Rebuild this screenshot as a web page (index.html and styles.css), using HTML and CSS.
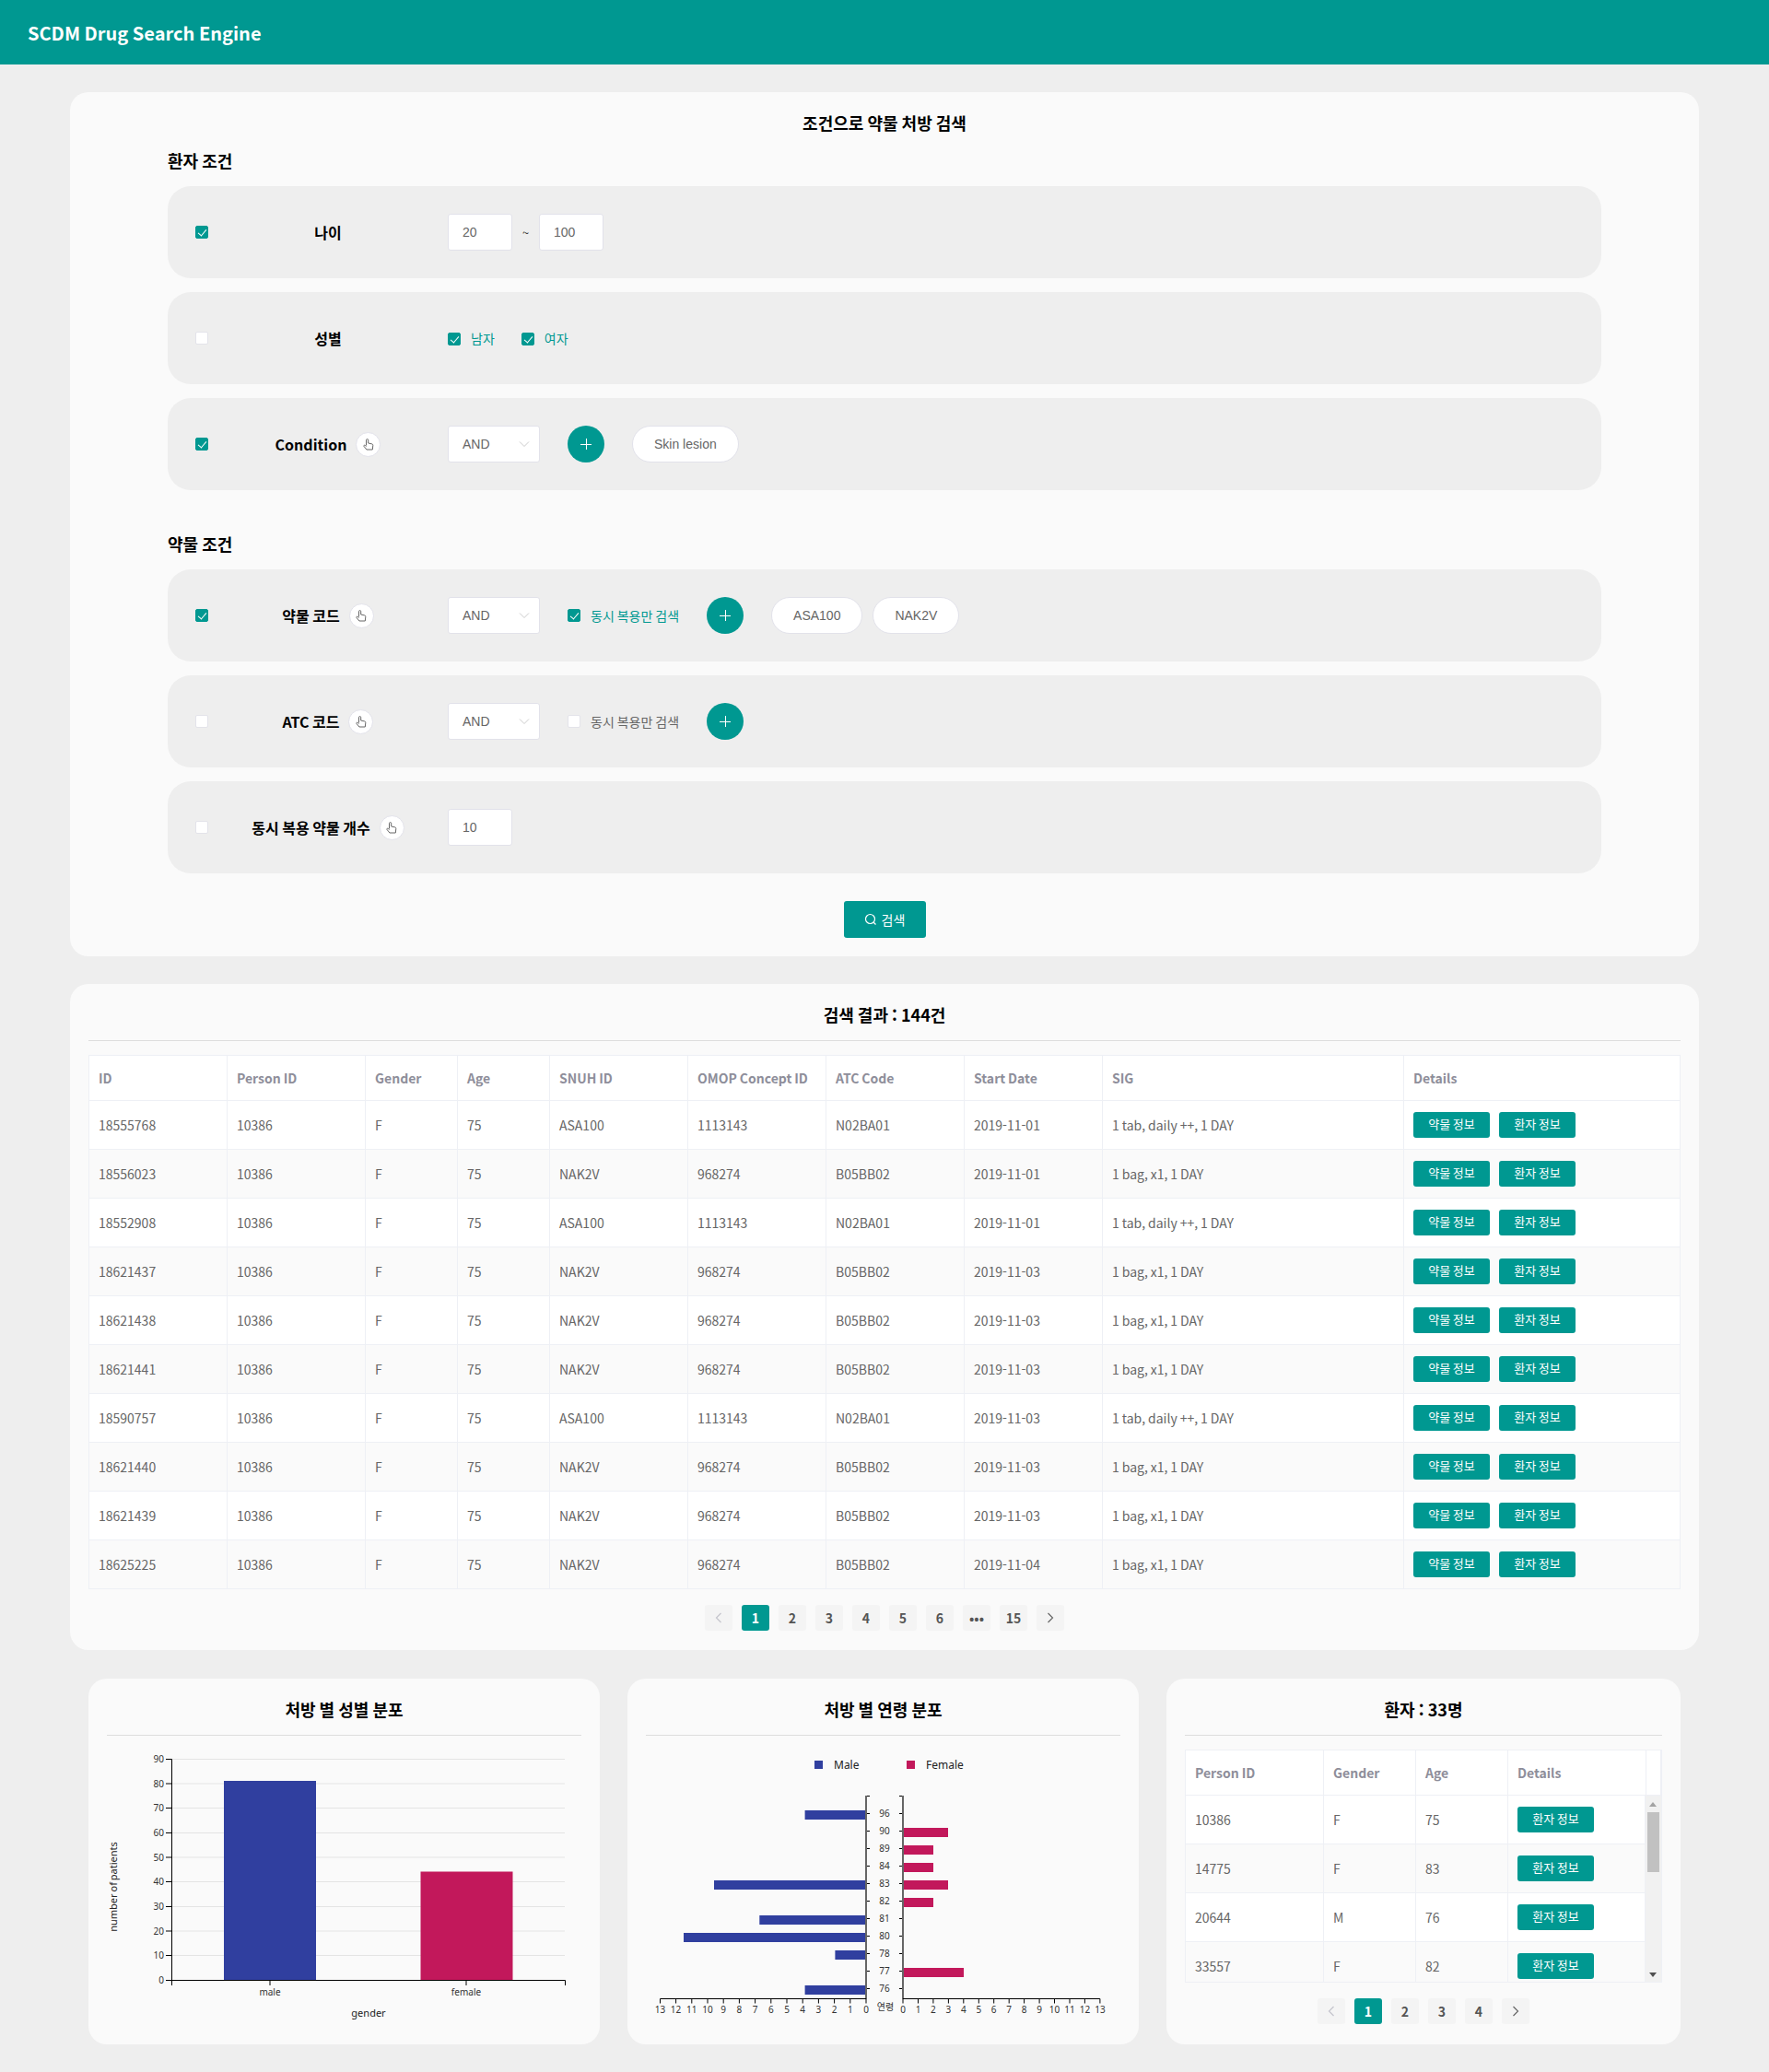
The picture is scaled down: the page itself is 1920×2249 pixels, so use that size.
FILE: index.html
```html
<!DOCTYPE html>
<html lang="ko">
<head>
    <meta charset="UTF-8">
    <title>SCDM Drug Search Engine</title>
    <link rel="stylesheet" href="styles.css">
</head>
<body>
    <svg class="defs">
        <defs>
            <symbol id="hand" viewBox="0 0 12 13"><path d="M3.500 7.500V1.700a1.100 1.100 0 0 1 2.200 0V5l4 .9c.8.2 1.200.8 1.100 1.500L10.300 12H4L1 8.500c-.6-.8.4-1.700 1.200-1.100L3.500 8.500"/></symbol>
            <symbol id="chev" viewBox="0 0 12 8"><path d="M1 1.500l5 5 5-5"/></symbol>
        </defs>
    </svg>

    <div class="header">SCDM Drug Search Engine</div>

    <div class="main">
        <div class="card search">
            <h2 class="title">조건으로 약물 처방 검색</h2>

            <h3 class="sec first">환자 조건</h3>
            <div class="row">
                <span class="chk on"></span>
                <div class="lbl">나이</div>
                <div class="ctl">
                    <div class="inp">20</div>
                    <span class="tilde">~</span>
                    <div class="inp">100</div>
                </div>
            </div>
            <div class="row">
                <span class="chk"></span>
                <div class="lbl">성별</div>
                <div class="ctl sex">
                    <label class="opt on"><span class="chk on"></span>남자</label>
                    <label class="opt on"><span class="chk on"></span>여자</label>
                </div>
            </div>
            <div class="row">
                <span class="chk on"></span>
                <div class="lbl">Condition <span class="tip"><svg><use href="#hand"/></svg></span></div>
                <div class="ctl">
                    <div class="sel">AND<svg><use href="#chev"/></svg></div>
                    <span class="add"></span>
                    <div class="chips"><span class="chip">Skin lesion</span></div>
                </div>
            </div>

            <h3 class="sec">약물 조건</h3>
            <div class="row">
                <span class="chk on"></span>
                <div class="lbl">약물 코드 <span class="tip"><svg><use href="#hand"/></svg></span></div>
                <div class="ctl">
                    <div class="sel">AND<svg><use href="#chev"/></svg></div>
                    <label class="opt on"><span class="chk on"></span>동시 복용만 검색</label>
                    <span class="add"></span>
                    <div class="chips"><span class="chip">ASA100</span><span class="chip">NAK2V</span></div>
                </div>
            </div>
            <div class="row">
                <span class="chk"></span>
                <div class="lbl">ATC 코드 <span class="tip"><svg><use href="#hand"/></svg></span></div>
                <div class="ctl">
                    <div class="sel">AND<svg><use href="#chev"/></svg></div>
                    <label class="opt"><span class="chk"></span>동시 복용만 검색</label>
                    <span class="add"></span>
                </div>
            </div>
            <div class="row">
                <span class="chk"></span>
                <div class="lbl">동시 복용 약물 개수 <span class="tip"><svg><use href="#hand"/></svg></span></div>
                <div class="ctl">
                    <div class="inp">10</div>
                </div>
            </div>

            <button class="btn-search"><svg viewBox="0 0 14 14"><circle cx="6.500" cy="6.500" r="5"/><path d="M10 10l2.500 2.500"/></svg>검색</button>
        </div>

        <div class="card results">
            <h2 class="title rule">검색 결과 : 144건</h2>
            <table class="tb">
                <colgroup>
                    <col class="w150"><col class="w150"><col class="w100"><col class="w100"><col class="w150"><col class="w150"><col class="w150"><col class="w150"><col class="w327"><col>
                </colgroup>
                <thead>
                    <tr><th>ID</th><th>Person ID</th><th>Gender</th><th>Age</th><th>SNUH ID</th><th>OMOP Concept ID</th><th>ATC Code</th><th>Start Date</th><th>SIG</th><th>Details</th></tr>
                </thead>
                <tbody>
                    <tr><td>18555768</td><td>10386</td><td>F</td><td>75</td><td>ASA100</td><td>1113143</td><td>N02BA01</td><td>2019-11-01</td><td>1 tab, daily ++, 1 DAY</td><td><a class="btn">약물 정보</a><a class="btn">환자 정보</a></td></tr>
                    <tr><td>18556023</td><td>10386</td><td>F</td><td>75</td><td>NAK2V</td><td>968274</td><td>B05BB02</td><td>2019-11-01</td><td>1 bag, x1, 1 DAY</td><td><a class="btn">약물 정보</a><a class="btn">환자 정보</a></td></tr>
                    <tr><td>18552908</td><td>10386</td><td>F</td><td>75</td><td>ASA100</td><td>1113143</td><td>N02BA01</td><td>2019-11-01</td><td>1 tab, daily ++, 1 DAY</td><td><a class="btn">약물 정보</a><a class="btn">환자 정보</a></td></tr>
                    <tr><td>18621437</td><td>10386</td><td>F</td><td>75</td><td>NAK2V</td><td>968274</td><td>B05BB02</td><td>2019-11-03</td><td>1 bag, x1, 1 DAY</td><td><a class="btn">약물 정보</a><a class="btn">환자 정보</a></td></tr>
                    <tr><td>18621438</td><td>10386</td><td>F</td><td>75</td><td>NAK2V</td><td>968274</td><td>B05BB02</td><td>2019-11-03</td><td>1 bag, x1, 1 DAY</td><td><a class="btn">약물 정보</a><a class="btn">환자 정보</a></td></tr>
                    <tr><td>18621441</td><td>10386</td><td>F</td><td>75</td><td>NAK2V</td><td>968274</td><td>B05BB02</td><td>2019-11-03</td><td>1 bag, x1, 1 DAY</td><td><a class="btn">약물 정보</a><a class="btn">환자 정보</a></td></tr>
                    <tr><td>18590757</td><td>10386</td><td>F</td><td>75</td><td>ASA100</td><td>1113143</td><td>N02BA01</td><td>2019-11-03</td><td>1 tab, daily ++, 1 DAY</td><td><a class="btn">약물 정보</a><a class="btn">환자 정보</a></td></tr>
                    <tr><td>18621440</td><td>10386</td><td>F</td><td>75</td><td>NAK2V</td><td>968274</td><td>B05BB02</td><td>2019-11-03</td><td>1 bag, x1, 1 DAY</td><td><a class="btn">약물 정보</a><a class="btn">환자 정보</a></td></tr>
                    <tr><td>18621439</td><td>10386</td><td>F</td><td>75</td><td>NAK2V</td><td>968274</td><td>B05BB02</td><td>2019-11-03</td><td>1 bag, x1, 1 DAY</td><td><a class="btn">약물 정보</a><a class="btn">환자 정보</a></td></tr>
                    <tr><td>18625225</td><td>10386</td><td>F</td><td>75</td><td>NAK2V</td><td>968274</td><td>B05BB02</td><td>2019-11-04</td><td>1 bag, x1, 1 DAY</td><td><a class="btn">약물 정보</a><a class="btn">환자 정보</a></td></tr>
                </tbody>
            </table>
            <div class="pager">
                <a class="off"><svg><use href="#chev"/></svg></a><a class="cur">1</a><a>2</a><a>3</a><a>4</a><a>5</a><a>6</a><a>•••</a><a>15</a><a class="next"><svg><use href="#chev"/></svg></a>
            </div>
        </div>

        <div class="bottom">
            <div class="card mini">
                <h2 class="title rule">처방 별 성별 분포</h2>
                <svg class="chart" viewBox="0 0 515 315">
                    <g class="grid">
                        <path d="M70 25.500H497M70 52H497M70 78.500H497M70 105.500H497M70 132H497M70 158.500H497M70 185.500H497M70 212H497M70 238.500H497"/>
                    </g>
                    <rect class="male" x="127" y="49" width="100" height="216"/>
                    <rect class="female" x="340.500" y="147.500" width="100" height="117.500"/>
                    <path class="axis" d="M64 25.500H70.500V265.500M64 52H70.500M64 78.500H70.500M64 105.500H70.500M64 132H70.500M64 158.500H70.500M64 185.500H70.500M64 212H70.500M64 238.500H70.500M64 265.500H497.500M70.500 265.500V271M177 265.500V271M390 265.500V271M497.500 265.500V271"/>
                    <g class="tick end">
                        <text x="62" y="29">90</text><text x="62" y="55.500">80</text><text x="62" y="82">70</text><text x="62" y="109">60</text><text x="62" y="135.500">50</text><text x="62" y="162">40</text><text x="62" y="189">30</text><text x="62" y="215.500">20</text><text x="62" y="242">10</text><text x="62" y="269">0</text>
                    </g>
                    <g class="tick mid">
                        <text x="177" y="282">male</text><text x="390" y="282">female</text>
                    </g>
                    <text class="axis-name" x="284" y="305">gender</text>
                    <text class="axis-name" transform="translate(11 164) rotate(-90)">number of patients</text>
                </svg>
            </div>

            <div class="card mini">
                <h2 class="title rule">처방 별 연령 분포</h2>
                <svg class="chart" viewBox="0 0 515 315">
                    <rect class="male" x="183" y="27" width="9" height="9"/>
                    <text class="legend" x="204" y="36">Male</text>
                    <rect class="female" x="283" y="27" width="9" height="9"/>
                    <text class="legend" x="304" y="36">Female</text>

                    <rect class="male" x="172.600" y="81" width="66.400" height="10"/>
                    <rect class="male" x="74" y="157" width="165" height="10"/>
                    <rect class="male" x="123.300" y="195" width="115.700" height="10"/>
                    <rect class="male" x="41" y="214" width="198" height="10"/>
                    <rect class="male" x="205.400" y="233" width="33.600" height="10"/>
                    <rect class="male" x="172.600" y="271" width="66.400" height="10"/>

                    <rect class="female" x="279" y="100" width="49" height="10"/>
                    <rect class="female" x="279" y="119" width="33" height="10"/>
                    <rect class="female" x="279" y="138" width="33" height="10"/>
                    <rect class="female" x="279" y="157" width="49" height="10"/>
                    <rect class="female" x="279" y="176" width="33" height="10"/>
                    <rect class="female" x="279" y="252" width="66" height="10"/>

                    <path class="axis" d="M239 65.500h4M239 84.500h4M239 103.500h4M239 122.500h4M239 141.500h4M239 160.500h4M239 179.500h4M239 198.500h4M239 217.500h4M239 236.500h4M239 255.500h4M239 274.500h4M275 65.500h4M275 84.500h4M275 103.500h4M275 122.500h4M275 141.500h4M275 160.500h4M275 179.500h4M275 198.500h4M275 217.500h4M275 236.500h4M275 255.500h4M275 274.500h4"/>
                    <path class="spine" d="M239 65V285M279 65V285"/>
                    <path class="axis" d="M15.500 290.500V285.500H239.500M32.600 285.500V290.500M49.800 285.500V290.500M67 285.500V290.500M84.200 285.500V290.500M101.400 285.500V290.500M118.600 285.500V290.500M135.800 285.500V290.500M153 285.500V290.500M170.200 285.500V290.500M187.400 285.500V290.500M204.600 285.500V290.500M221.800 285.500V290.500M239 285.500V290.500"/>
                    <path class="axis" d="M278.500 285.500H492.900V290.500M279 285.500V290.500M295.500 285.500V290.500M311.900 285.500V290.500M328.400 285.500V290.500M344.800 285.500V290.500M361.300 285.500V290.500M377.700 285.500V290.500M394.200 285.500V290.500M410.600 285.500V290.500M427.100 285.500V290.500M443.500 285.500V290.500M460 285.500V290.500M476.400 285.500V290.500"/>
                    <g class="tick mid">
                        <text x="259" y="88">96</text><text x="259" y="107">90</text><text x="259" y="126">89</text><text x="259" y="145">84</text><text x="259" y="164">83</text><text x="259" y="183">82</text><text x="259" y="202">81</text><text x="259" y="221">80</text><text x="259" y="240">78</text><text x="259" y="259">77</text><text x="259" y="278">76</text>
                        <text x="260" y="298">연령</text>
                        <text x="15.400" y="301">13</text><text x="32.600" y="301">12</text><text x="49.800" y="301">11</text><text x="67" y="301">10</text><text x="84.200" y="301">9</text><text x="101.400" y="301">8</text><text x="118.600" y="301">7</text><text x="135.800" y="301">6</text><text x="153" y="301">5</text><text x="170.200" y="301">4</text><text x="187.400" y="301">3</text><text x="204.600" y="301">2</text><text x="221.800" y="301">1</text><text x="239" y="301">0</text>
                        <text x="279" y="301">0</text><text x="295.500" y="301">1</text><text x="311.900" y="301">2</text><text x="328.400" y="301">3</text><text x="344.800" y="301">4</text><text x="361.300" y="301">5</text><text x="377.700" y="301">6</text><text x="394.200" y="301">7</text><text x="410.600" y="301">8</text><text x="427.100" y="301">9</text><text x="443.500" y="301">10</text><text x="460" y="301">11</text><text x="476.400" y="301">12</text><text x="492.900" y="301">13</text>
                    </g>
                </svg>
            </div>

            <div class="card mini">
                <h2 class="title rule">환자 : 33명</h2>
                <div class="patients">
                    <table class="tb">
                        <colgroup><col class="w150"><col class="w100"><col class="w100"><col class="w150"><col></colgroup>
                        <thead>
                            <tr><th>Person ID</th><th>Gender</th><th>Age</th><th>Details</th><th></th></tr>
                        </thead>
                    </table>
                    <div class="scroll">
                        <table class="tb">
                            <colgroup><col class="w150"><col class="w100"><col class="w100"><col></colgroup>
                            <tbody>
                                <tr><td>10386</td><td>F</td><td>75</td><td><a class="btn">환자 정보</a></td></tr>
                                <tr><td>14775</td><td>F</td><td>83</td><td><a class="btn">환자 정보</a></td></tr>
                                <tr><td>20644</td><td>M</td><td>76</td><td><a class="btn">환자 정보</a></td></tr>
                                <tr><td>33557</td><td>F</td><td>82</td><td><a class="btn">환자 정보</a></td></tr>
                            </tbody>
                        </table>
                        <div class="bar"><i class="up"></i><b></b><i class="down"></i></div>
                    </div>
                </div>
                <div class="pager">
                    <a class="off"><svg><use href="#chev"/></svg></a><a class="cur">1</a><a>2</a><a>3</a><a>4</a><a class="next"><svg><use href="#chev"/></svg></a>
                </div>
            </div>
        </div>
    </div>
</body>
</html>
```

FILE: styles.css
```css
* {padding: 0; margin: 0; box-sizing: border-box;}
body {background: #eee; font-family: "Noto Sans CJK KR", "Noto Sans", sans-serif; font-size: 14px; color: #666; word-spacing: -0.07em;}
.defs {position: absolute; width: 0; height: 0;}

.header {height: 70px; padding-left: 30px; background: #009891; color: #fff; font-size: 20px; font-weight: 700; line-height: 72px;}
.main {padding: 30px 76px;}

.card {background: #fafafa; border-radius: 20px;}
.title {font-size: 18px; font-weight: 700; line-height: 26px; color: #000; text-align: center;}
.title.rule {padding-bottom: 15px; border-bottom: 1px solid #ddd;}

/* search form */
.search {padding: 20px 106px; height: 938px;}
.sec {margin: 45px 0 15px; font-size: 18px; font-weight: 700; line-height: 26px; color: #000;}
.sec.first {margin-top: 15px;}
.row {display: flex; align-items: center; height: 100px; margin-bottom: 15px; padding-left: 30px; background: #eee; border-radius: 25px;}
.lbl {display: flex; align-items: center; justify-content: center; gap: 10px; width: 260px; font-size: 16px; font-weight: 700; color: #000;}
.ctl {display: flex; align-items: center; gap: 30px;}

.chk {position: relative; display: block; flex: none; width: 14px; height: 14px; background: #fff; border: 1px solid #e3e3ea; border-radius: 2px;}
.chk.on {background: #009891; border-color: #009891;}
.chk.on:after {content: ""; position: absolute; left: 4px; top: 1px; width: 4px; height: 8px; border: solid #fff; border-width: 0 1px 1px 0; transform: rotate(40deg);}

.tip {display: flex; align-items: center; justify-content: center; width: 27px; height: 27px; background: #fff; border: 1px solid #e2e2ea; border-radius: 50%;}
.tip svg {width: 12px; height: 13px; fill: none; stroke: #666; stroke-width: 1;}

.inp {width: 70px; height: 40px; padding-left: 15px; background: #fff; border: 1px solid #e2e2ea; border-radius: 3px; font-family: "Liberation Sans", sans-serif; line-height: 38px; color: #666;}
.tilde {width: 29px; margin: 0 -30px; text-align: center; color: #333; font-size: 13px;}
.sel {display: flex; align-items: center; justify-content: space-between; width: 100px; height: 40px; padding: 0 10px 0 15px; background: #fff; border: 1px solid #e2e2ea; border-radius: 3px; font-family: "Liberation Sans", sans-serif; color: #666;}
.sel svg {width: 12px; height: 8px; fill: none; stroke: #ccc; stroke-width: 1;}

.opt {display: flex; align-items: center; gap: 11px; font-size: 14px; color: #666;}
.opt.on {color: #009891;}
.ctl.sex {gap: 29px;}
.sex .chk {margin-top: 2px;}

.add {position: relative; display: block; flex: none; width: 40px; height: 40px; background: #009891; border-radius: 50%;}
.add:before, .add:after {content: ""; position: absolute; background: #fff;}
.add:before {left: 14px; top: 19.500px; width: 12px; height: 1px;}
.add:after {left: 19.500px; top: 14px; width: 1px; height: 12px;}

.chips {display: flex; gap: 11px;}
.chip {height: 40px; padding: 0 23px; background: #fff; border: 1px solid #e2e2ea; border-radius: 20px; font-family: "Liberation Sans", sans-serif; line-height: 38px; color: #666; word-spacing: 0;}

.btn-search {display: flex; align-items: center; justify-content: center; gap: 5px; width: 89px; height: 40px; margin: 30px auto 0; background: #009891; border: 0; border-radius: 3px; color: #fff; font-family: inherit; font-size: 14px;}
.btn-search svg {width: 14px; height: 14px; fill: none; stroke: #fff; stroke-width: 1.200;}

/* tables */
.results {margin-top: 30px; padding: 20px 20px; height: 723px;}
.results .tb {margin-top: 15px;}
.tb {width: 100%; table-layout: fixed; border-collapse: collapse; background: #fff;}
.tb th, .tb td {padding: 0 10px; border: 1px solid #eef0f5; text-align: left; white-space: nowrap;}
.tb th {height: 49px; font-weight: 700; color: #8e8e9a;}
.tb td {height: 53px; color: #666;}
.tb tbody tr:nth-child(even) {background: #fafafa;}
.w100 {width: 100px;}
.w150 {width: 150px;}
.w327 {width: 327px;}

.btn {display: inline-block; width: 83px; height: 28px; margin-right: 10px; background: #009891; border-radius: 3px; color: #fff; font-size: 13px; line-height: 26px; text-align: center; vertical-align: middle;}

.pager {display: flex; justify-content: center; gap: 10px; margin-top: 17px;}
.pager a {display: flex; align-items: center; justify-content: center; width: 30px; height: 28px; background: #f4f4f4; border-radius: 3px; font-weight: 700; color: #555;}
.pager a.cur {background: #009891; color: #fff;}
.pager svg {width: 12px; height: 8px; fill: none; stroke: #666; stroke-width: 1.200; transform: rotate(-90deg);}
.pager a.off svg {stroke: #c4c4cc; transform: rotate(90deg);}

/* bottom row */
.bottom {display: grid; grid-template-columns: 555px 555px 558px; gap: 30px; margin: 31px 20px 0;}
.mini {height: 397px; padding: 20px;}
.chart {display: block; width: 515px; height: 315px; overflow: visible;}
.chart .male {fill: #303f9f;}
.chart .female {fill: #c2185b;}
.grid path {fill: none; stroke: #e4e4e4; stroke-width: 1;}
.axis {fill: none; stroke: #000; stroke-width: 1;}
.spine {fill: none; stroke: #666; stroke-width: 2;}
.tick text {font-family: "Noto Sans", "Noto Sans CJK KR", sans-serif; font-size: 10px; fill: #333;}
.tick.end text {text-anchor: end;}
.tick.mid text {text-anchor: middle;}
.axis-name {font-family: "Noto Sans", sans-serif; font-size: 11px; fill: #222; text-anchor: middle;}
.legend {font-family: "Noto Sans", sans-serif; font-size: 12px; fill: #222;}

.patients {margin-top: 15px; height: 253px; border-right: 1px solid #eef0f5; border-bottom: 1px solid #eef0f5; overflow: hidden;}
.scroll {position: relative; display: flex; height: 204px; overflow: hidden; background: #fff;}
.scroll .tb {width: 500px; flex: none; align-self: flex-start;}
.scroll .tb tr:first-child td {height: 52px; border-top: 0;}
.patients .btn {margin-right: 0;}
.bar {position: relative; flex: 1; height: 100%; background: #f1f1f1;}
.bar b {position: absolute; left: 2px; right: 2px; top: 18px; height: 65px; background: #c1c1c1;}
.bar i {position: absolute; left: 4px; width: 0; height: 0; border-style: solid; border-color: transparent;}
.bar .up {top: 7px; border-width: 0 4px 5px; border-bottom-color: #a3a3a3;}
.bar .down {bottom: 7px; border-width: 5px 4px 0; border-top-color: #505050;}
```
